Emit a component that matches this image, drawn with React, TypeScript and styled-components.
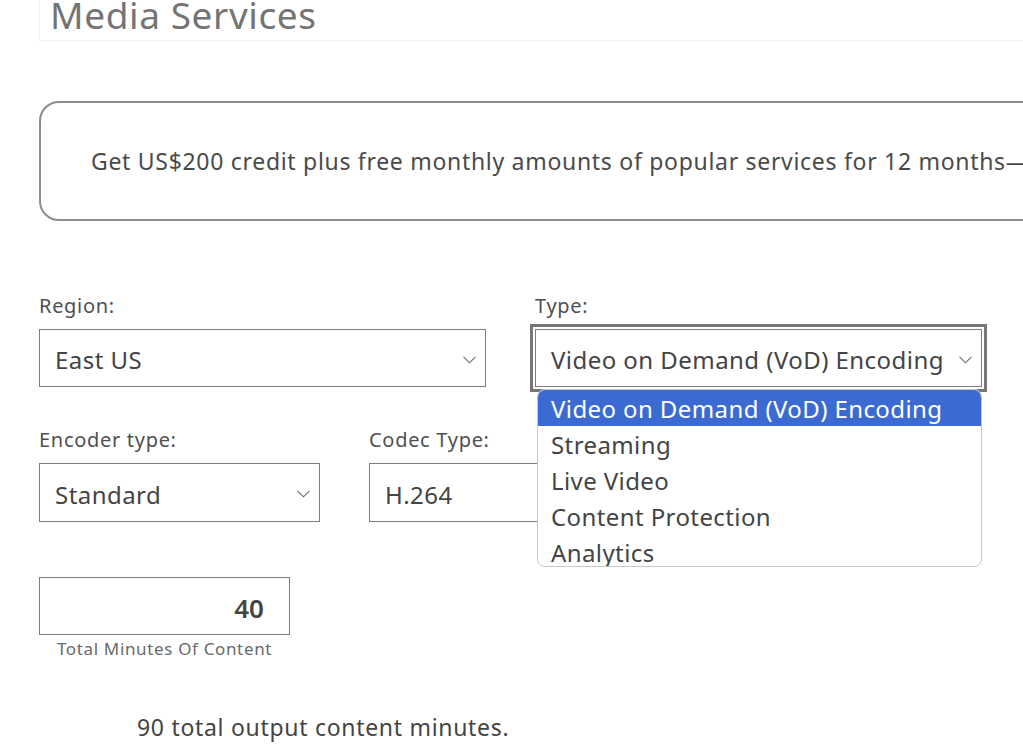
import React from 'react';
import styled, { createGlobalStyle } from 'styled-components';

const GlobalStyle = createGlobalStyle`
  html, body {
    margin: 0;
    padding: 0;
    background: #fff;
    overflow: hidden;
  }
  body {
    font-family: "Noto Sans", "Open Sans", Arial, sans-serif;
    color: #444;
  }
`;

const Page = styled.div`
  padding-left: 39px;
  width: 1023px;
  height: 748px;
  box-sizing: border-box;
  overflow: hidden;
`;

const Header = styled.div`
  height: 41px;
  box-sizing: border-box;
  display: flex;
  align-items: flex-end;
  border-left: 1px solid #f0f0f0;
  border-bottom: 1px solid #f0f0f0;
  padding-left: 10px;
`;

const Title = styled.h1`
  margin: 0 0 7px;
  font-size: 37px;
  line-height: 36px;
  letter-spacing: 0.6px;
  font-weight: 400;
  color: #747474;
  white-space: nowrap;
`;

const Banner = styled.div`
  margin-top: 60px;
  height: 120px;
  width: 1100px;
  box-sizing: border-box;
  border: 2px solid #8c8c8c;
  border-radius: 20px;
  display: flex;
  align-items: center;
  padding-left: 50px;
  font-size: 23px;
  letter-spacing: 0.7px;
  color: #4a4a4a;
  white-space: nowrap;
`;

const Form = styled.div`
  margin-top: 72px;
  width: 943px;
  display: flex;
  flex-direction: column;
  gap: 40px;
`;

const Row = styled.div<{ $cols: string }>`
  display: grid;
  grid-template-columns: ${(p) => p.$cols};
  column-gap: 49px;
`;

const Field = styled.div`
  position: relative;
  display: flex;
  flex-direction: column;
  gap: 10px;
`;

const Label = styled.label`
  font-size: 20px;
  line-height: 26px;
  letter-spacing: 0.7px;
  color: #505050;
`;

const Select = styled.div<{ $focused?: boolean; $height?: number }>`
  height: ${(p) => p.$height ?? 58}px;
  box-sizing: border-box;
  border: 1px solid #7e7e7e;
  display: flex;
  align-items: center;
  justify-content: space-between;
  padding: 3px 9px 0 15px;
  font-size: 24px;
  letter-spacing: 0.45px;
  color: #444;
  background: #fff;
  white-space: nowrap;
  ${(p) =>
    p.$focused &&
    `
    outline: 3px solid #777;
    outline-offset: 2px;
  `}
`;

const Chevron = () => (
  <svg width="13" height="8" viewBox="0 0 13 8" fill="none">
    <polyline points="0.5,0.8 6.5,6.8 12.5,0.8" stroke="#6a6a6a" strokeWidth="1.1" />
  </svg>
);

const Menu = styled.ul`
  position: absolute;
  left: 2px;
  right: 0;
  top: 96px;
  margin: 0;
  padding: 0;
  list-style: none;
  height: 178px;
  overflow: hidden;
  box-sizing: border-box;
  border: 1px solid #c8c8c8;
  border-radius: 8px;
  background: #fff;
  z-index: 2;
`;

const Option = styled.li<{ $active?: boolean }>`
  height: 36px;
  display: flex;
  align-items: center;
  padding-left: 13px;
  font-size: 24px;
  letter-spacing: 0.4px;
  white-space: nowrap;
  color: ${(p) => (p.$active ? '#fff' : '#444')};
  background: ${(p) => (p.$active ? '#3b6bd2' : 'transparent')};
`;

const MinutesBlock = styled.div`
  margin-top: 55px;
  width: 251px;
  display: flex;
  flex-direction: column;
  align-items: center;
  gap: 2px;
`;

const NumberBox = styled.div`
  width: 100%;
  height: 58px;
  box-sizing: border-box;
  border: 1px solid #7e7e7e;
  display: flex;
  align-items: center;
  justify-content: flex-end;
  padding: 3px 25px 0 0;
  font-size: 26px;
  font-weight: 600;
  color: #444;
`;

const Caption = styled.span`
  font-size: 17px;
  line-height: 24px;
  letter-spacing: 0.65px;
  color: #6a6a6a;
  white-space: nowrap;
`;

const Summary = styled.p`
  margin: 50px 0 0 98px;
  font-size: 23px;
  letter-spacing: 0.7px;
  color: #444;
  white-space: nowrap;
`;

const typeOptions = [
  'Video on Demand (VoD) Encoding',
  'Streaming',
  'Live Video',
  'Content Protection',
  'Analytics',
];

export default function App() {
  return (
    <>
      <GlobalStyle />
      <Page>
        <Header>
          <Title>Media Services</Title>
        </Header>

        <Banner>
          Get US$200 credit plus free monthly amounts of popular services for 12 months—
        </Banner>

        <Form>
          <Row $cols="447px 447px">
            <Field>
              <Label>Region:</Label>
              <Select>
                East US
                <Chevron />
              </Select>
            </Field>
            <Field>
              <Label>Type:</Label>
              <Select $focused>
                Video on Demand (VoD) Encoding
                <Chevron />
              </Select>
              <Menu>
                {typeOptions.map((o, i) => (
                  <Option key={o} $active={i === 0}>
                    {o}
                  </Option>
                ))}
              </Menu>
            </Field>
          </Row>
          <Row $cols="281px 613px">
            <Field>
              <Label>Encoder type:</Label>
              <Select $height={59}>
                Standard
                <Chevron />
              </Select>
            </Field>
            <Field>
              <Label>Codec Type:</Label>
              <Select $height={59}>H.264</Select>
            </Field>
          </Row>
        </Form>

        <MinutesBlock>
          <NumberBox>40</NumberBox>
          <Caption>Total Minutes Of Content</Caption>
        </MinutesBlock>

        <Summary>90 total output content minutes.</Summary>
      </Page>
    </>
  );
}
